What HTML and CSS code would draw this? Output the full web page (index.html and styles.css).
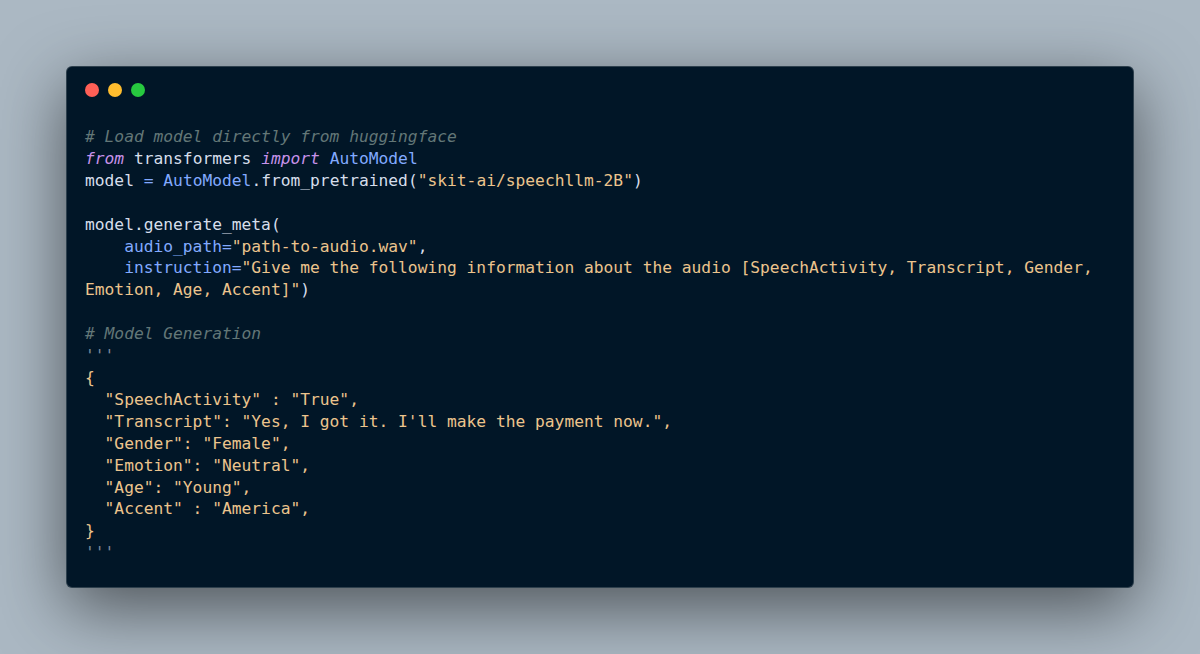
FILE: index.html
```html
<!DOCTYPE html>
<html>
<head>
<meta charset="utf-8">
<link rel="stylesheet" href="styles.css">
</head>
<body>
<div class="page">
  <div class="window">
    <div class="dots">
      <span class="dot red"></span>
      <span class="dot yellow"></span>
      <span class="dot green"></span>
    </div>
<pre class="code"><span class="c"># Load model directly from huggingface</span>
<span class="k">from</span> <span class="v">transformers</span> <span class="k">import</span> <span class="b">AutoModel</span>
<span class="v">model</span> <span class="b">=</span> <span class="b">AutoModel</span><span class="v">.from_pretrained(</span><span class="s">"skit-ai/speechllm-2B"</span><span class="v">)</span>

<span class="v">model.generate_meta(</span>
    <span class="b">audio_path=</span><span class="s">"path-to-audio.wav"</span><span class="v">,</span>
    <span class="b">instruction=</span><span class="s">"Give me the following information about the audio [SpeechActivity, Transcript, Gender,
Emotion, Age, Accent]"</span><span class="v">)</span>

<span class="c"># Model Generation</span>
<span class="q">'''</span>
<span class="s">{
  "SpeechActivity" : "True",
  "Transcript": "Yes, I got it. I'll make the payment now.",
  "Gender": "Female",
  "Emotion": "Neutral",
  "Age": "Young",
  "Accent" : "America",
}</span>
<span class="q">'''</span></pre>
  </div>
</div>
</body>
</html>
```
FILE: styles.css
```css
html, body {
  margin: 0;
  padding: 0;
}
body {
  background: #abb8c3;
  width: 1200px;
  height: 654px;
  overflow: hidden;
}
.page {
  padding: 66px;
  box-sizing: border-box;
  height: 654px;
}
.window {
  width: 1068px;
  height: 522px;
  box-sizing: border-box;
  background: #011627;
  border-radius: 6px;
  border: 1px solid rgba(255, 255, 255, 0.18);
  box-shadow: 0 20px 68px rgba(0, 0, 0, 0.55);
  padding: 16px 18px 0 18px;
}
.dots {
  display: flex;
  gap: 9px;
  height: 14px;
}
.dot {
  width: 14px;
  height: 14px;
  border-radius: 50%;
}
.red { background: #ff5f56; }
.yellow { background: #ffbd2e; }
.green { background: #27c93f; }
.code {
  margin: 29px 0 0 0;
  font-family: "DejaVu Sans Mono", monospace;
  font-size: 16.25px;
  line-height: 21.9px;
  color: #d6deeb;
  white-space: pre;
}
.c { color: #637777; font-style: italic; }
.k { color: #c792ea; font-style: italic; }
.v { color: #d6deeb; }
.b { color: #82aaff; }
.s { color: #ecc48d; }
.q { color: #7c8a9a; }
```
